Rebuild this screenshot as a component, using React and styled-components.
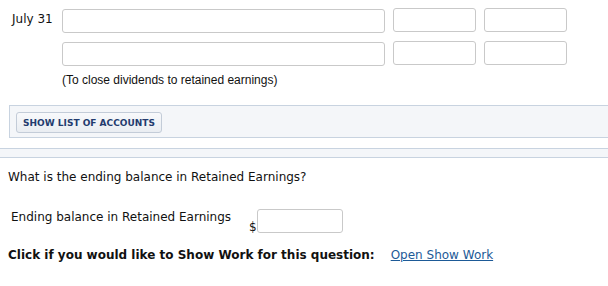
import React from "react";
import styled, { createGlobalStyle } from "styled-components";

const GlobalStyle = createGlobalStyle`
  body {
    margin: 0;
    background: #fff;
    font-family: "DejaVu Sans", Verdana, sans-serif;
    font-size: 12px;
    color: #111;
  }
`;

const App = () => {
  return (
    <Page>
      <GlobalStyle />
      <Entries>
        <EntryRow>
          <DateLabel>July 31</DateLabel>
          <Field $w={323} $shift={1} />
          <Field $w={83} />
          <Field $w={83} />
        </EntryRow>
        <EntryRow>
          <DateLabel />
          <Field $w={323} $shift={1} />
          <Field $w={83} />
          <Field $w={83} />
        </EntryRow>
        <Note>(To close dividends to retained earnings)</Note>
      </Entries>

      <AccountsPanel>
        <SmallButton>SHOW LIST OF ACCOUNTS</SmallButton>
      </AccountsPanel>

      <Divider />

      <Question>What is the ending balance in Retained Earnings?</Question>

      <AnswerRow>
        <AnswerLabel>Ending balance in Retained Earnings</AnswerLabel>
        <Dollar>$</Dollar>
        <Field $w={86} />
      </AnswerRow>

      <WorkRow>
        <strong>Click if you would like to Show Work for this question:</strong>
        <WorkLink href="#">Open Show Work</WorkLink>
      </WorkRow>
    </Page>
  );
};

const Page = styled.div`
  width: 608px;
  height: 286px;
  overflow: hidden;
`;

const Entries = styled.div`
  padding: 8px 0 0 0;
  display: flex;
  flex-direction: column;
  gap: 8px;
`;

const EntryRow = styled.div`
  display: flex;
  align-items: flex-start;
  gap: 8px;
`;

const DateLabel = styled.div`
  width: 42px;
  padding-left: 12px;
  padding-top: 3px;
  line-height: 16px;
`;

const Field = styled.input`
  box-sizing: border-box;
  width: ${(p) => p.$w}px;
  height: 24px;
  margin: ${(p) => p.$shift || 0}px 0 0 0;
  padding: 2px 4px;
  border: 1px solid #c9c9c9;
  border-radius: 3px;
  background: #fff;
  font: inherit;
`;

const Note = styled.div`
  margin: -1px 0 0 62px;
  font-family: "Liberation Sans", Arial, sans-serif;
  font-size: 12px;
  line-height: 14px;
`;

const AccountsPanel = styled.div`
  margin: 18px 0 0 9px;
  height: 33px;
  box-sizing: border-box;
  border: 1px solid #c8d3e0;
  border-right: none;
  background: #f4f6f9;
  padding: 6px 0 0 6px;
`;

const SmallButton = styled.button`
  box-sizing: border-box;
  height: 21px;
  width: 146px;
  padding: 0;
  border: 1px solid #c3ccd8;
  border-radius: 3px;
  background: linear-gradient(#f8f9fb, #e9edf2);
  color: #233b6e;
  font-family: "DejaVu Sans", Verdana, sans-serif;
  font-size: 9px;
  font-weight: bold;
`;

const Divider = styled.div`
  margin-top: 10px;
  height: 10px;
  box-sizing: border-box;
  border-top: 1px solid #c8d3e0;
  border-bottom: 1px solid #c8d3e0;
  background: #f4f6f9;
`;

const Question = styled.div`
  margin: 11px 0 0 8px;
  line-height: 16px;
`;

const AnswerRow = styled.div`
  display: flex;
  align-items: flex-start;
  margin: 24px 0 0 11px;
`;

const AnswerLabel = styled.div`
  width: 238px;
  line-height: 16px;
`;

const Dollar = styled.div`
  padding-top: 10px;
  line-height: 16px;
`;

const WorkRow = styled.div`
  margin: 12px 0 0 8px;
  display: flex;
  gap: 16px;
  line-height: 16px;
`;

const WorkLink = styled.a`
  color: #1d5a97;
  text-decoration: underline;
`;

export default App;
